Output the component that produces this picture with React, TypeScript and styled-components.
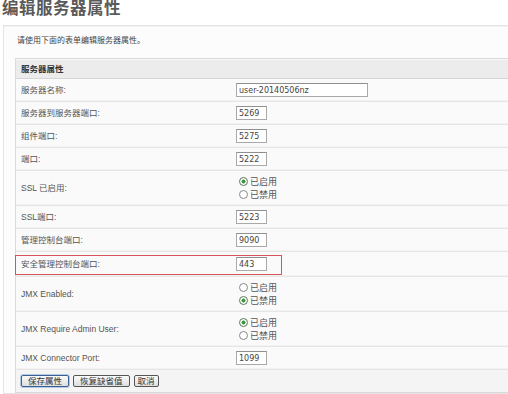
import styled, { createGlobalStyle, css } from "styled-components";

const GlobalStyle = createGlobalStyle`
  html, body {
    margin: 0;
    padding: 0;
    background: #ffffff;
  }
  body {
    font-family: "Liberation Sans", "Noto Sans CJK SC", sans-serif;
    color: #555;
    overflow: hidden;
  }
`;

type Field =
  | { kind: "text"; label: string; value: string; wide?: boolean; highlight?: boolean }
  | { kind: "radio"; label: string; enabled: boolean };

const fields: Field[] = [
  { kind: "text", label: "服务器名称:", value: "user-20140506nz", wide: true },
  { kind: "text", label: "服务器到服务器端口:", value: "5269" },
  { kind: "text", label: "组件端口:", value: "5275" },
  { kind: "text", label: "端口:", value: "5222" },
  { kind: "radio", label: "SSL 已启用:", enabled: true },
  { kind: "text", label: "SSL端口:", value: "5223" },
  { kind: "text", label: "管理控制台端口:", value: "9090" },
  { kind: "text", label: "安全管理控制台端口:", value: "443", highlight: true },
  { kind: "radio", label: "JMX Enabled:", enabled: false },
  { kind: "radio", label: "JMX Require Admin User:", enabled: true },
  { kind: "text", label: "JMX Connector Port:", value: "1099" },
];

const App = () => {
  return (
    <Page>
      <GlobalStyle />
      <Title>编辑服务器属性</Title>
      <Panel>
        <Intro>请使用下面的表单编辑服务器属性。</Intro>
        <Section>
          <SectionHeader>服务器属性</SectionHeader>
          {fields.map((f) => (
            <Row key={f.label} $tall={f.kind === "radio"} $highlight={f.kind === "text" && !!f.highlight}>
              <Label>{f.label}</Label>
              {f.kind === "text" ? (
                <Input $wide={!!f.wide} defaultValue={f.value} />
              ) : (
                <Radios>
                  <RadioItem>
                    <RadioDot $checked={f.enabled} />
                    已启用
                  </RadioItem>
                  <RadioItem>
                    <RadioDot $checked={!f.enabled} />
                    已禁用
                  </RadioItem>
                </Radios>
              )}
            </Row>
          ))}
          <ButtonRow>
            <Button $focused>保存属性</Button>
            <Button>恢复缺省值</Button>
            <Button>取消</Button>
          </ButtonRow>
        </Section>
      </Panel>
    </Page>
  );
};

export default App;

const Page = styled.div`
  width: 508px;
  height: 394px;
  overflow: hidden;
`;

const Title = styled.h1`
  margin: 0 0 0 2px;
  height: 25px;
  font-size: 16.5px;
  line-height: 16px;
  font-weight: 700;
  letter-spacing: 0.5px;
  color: #5a5a5a;
`;

const Panel = styled.div`
  margin-left: 3px;
  width: 540px;
  border: 1px solid #e4e4e4;
  box-shadow: inset 0 1px 0 #f2f2f2;
  background: #fcfcfc;
  padding: 10px 0 0 11px;
`;

const Intro = styled.p`
  margin: 0 0 12px 2px;
  font-size: 8px;
  line-height: 10px;
  color: #444;
`;

const Section = styled.div`
  border: 1px solid #dadada;
  border-right: none;
  background: #fafafa;
`;

const SectionHeader = styled.div`
  height: 18px;
  line-height: 18px;
  padding-left: 5px;
  font-size: 8.5px;
  font-weight: 700;
  color: #333;
  background: #ececec;
  border-top: 1px solid #f6f6f6;
  border-bottom: 1px solid #d6d6d6;
`;

const Row = styled.div<{ $tall: boolean; $highlight: boolean }>`
  position: relative;
  display: flex;
  align-items: center;
  height: ${(p) => (p.$tall ? "34px" : "22px")};
  border-bottom: 1px solid #e6e6e6;
  box-shadow: inset 0 -1px 0 #f2f2f2;
  ${(p) =>
    p.$highlight &&
    css`
      height: 24px;
      &::after {
        content: "";
        position: absolute;
        left: -1px;
        top: 3px;
        width: 265px;
        height: 18px;
        border: 1px solid #d9535a;
        pointer-events: none;
      }
    `}
`;

const Label = styled.div`
  width: 215px;
  padding-left: 5px;
  font-size: 8.5px;
  line-height: 10px;
  color: #555;
`;

const Input = styled.input<{ $wide: boolean }>`
  box-sizing: border-box;
  width: ${(p) => (p.$wide ? "132px" : "31px")};
  height: 14px;
  margin: 0;
  padding: 0 2px;
  border: 1px solid #a9a9a9;
  border-top-color: #8f8f8f;
  background: #fff;
  font-family: "DejaVu Sans", "Liberation Sans", sans-serif;
  font-size: 8px;
  color: #444;
  outline: none;
`;

const Radios = styled.div`
  display: flex;
  flex-direction: column;
  gap: 3px;
  margin-left: 3px;
`;

const RadioItem = styled.label`
  display: flex;
  align-items: center;
  gap: 2px;
  height: 10px;
  font-size: 9px;
  line-height: 10px;
  color: #555;
`;

const RadioDot = styled.span<{ $checked: boolean }>`
  box-sizing: border-box;
  width: 9px;
  height: 9px;
  border-radius: 50%;
  border: 1px solid ${(p) => (p.$checked ? "#5a7a5a" : "#8a8a8a")};
  background: ${(p) =>
    p.$checked ? "radial-gradient(circle, #3c9a3c 0 1.8px, #fff 2.3px)" : "#fff"};
`;

const ButtonRow = styled.div`
  display: flex;
  align-items: center;
  gap: 4px;
  height: 22px;
  padding-left: 5px;
  background: #f4f4f4;
`;

const Button = styled.button<{ $focused?: boolean }>`
  height: 12px;
  padding: 0 6px;
  margin: 0;
  font-family: "Liberation Sans", "Noto Sans CJK SC", sans-serif;
  font-size: 8.5px;
  line-height: 10px;
  color: #333;
  border: 1px solid ${(p) => (p.$focused ? "#3a5f92" : "#555")};
  border-radius: 2px;
  background: linear-gradient(#fbfbfb, #dedede);
  box-shadow: ${(p) => (p.$focused ? "0 0 0 1px #b7c9e2" : "none")};
  &:last-child {
    padding: 0 3px;
  }
`;
